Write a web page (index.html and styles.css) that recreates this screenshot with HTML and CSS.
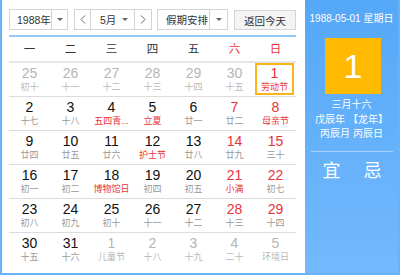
FILE: index.html
```html
<html>
<head>
<title>万年历</title>
<link rel="stylesheet" href="styles.css">
</head>
<body>
<div class="wnl">
	<div class="main">
		<div class="bar">
			<div class="sel year"><span class="txt">1988年</span><span class="drop"><i class="caret"></i></span></div>
			<div class="sel month">
				<span class="nav"><svg width="6" height="9" viewBox="0 0 6 9"><polyline points="5,0.5 1,4.5 5,8.5" fill="none" stroke="#666" stroke-width="1"/></svg></span>
				<span class="txt">5月</span><i class="caret"></i>
				<span class="nav next"><svg width="6" height="9" viewBox="0 0 6 9"><polyline points="1,0.5 5,4.5 1,8.5" fill="none" stroke="#666" stroke-width="1"/></svg></span>
			</div>
			<div class="sel hol"><span class="txt">假期安排</span><span class="drop"><i class="caret"></i></span></div>
			<button type="button" class="back">返回今天</button>
		</div>

		<div class="head">
			<span>一</span><span>二</span><span>三</span><span>四</span><span>五</span><span class="red">六</span><span class="red">日</span>
		</div>

		<div class="week">
			<div class="day other"><b>25</b><i>初十</i></div>
			<div class="day other"><b>26</b><i>十一</i></div>
			<div class="day other"><b>27</b><i>十二</i></div>
			<div class="day other"><b>28</b><i>十三</i></div>
			<div class="day other"><b>29</b><i>十四</i></div>
			<div class="day other"><b>30</b><i>十五</i></div>
			<div class="day wkd fest today"><b>1</b><i>劳动节</i></div>
		</div>
		<div class="week">
			<div class="day"><b>2</b><i>十七</i></div>
			<div class="day"><b>3</b><i>十八</i></div>
			<div class="day fest"><b>4</b><i title="五四青年节">五四青...</i></div>
			<div class="day fest"><b>5</b><i>立夏</i></div>
			<div class="day"><b>6</b><i>廿一</i></div>
			<div class="day wkd"><b>7</b><i>廿二</i></div>
			<div class="day wkd fest"><b>8</b><i>母亲节</i></div>
		</div>
		<div class="week">
			<div class="day"><b>9</b><i>廿四</i></div>
			<div class="day"><b>10</b><i>廿五</i></div>
			<div class="day"><b>11</b><i>廿六</i></div>
			<div class="day fest"><b>12</b><i>护士节</i></div>
			<div class="day"><b>13</b><i>廿八</i></div>
			<div class="day wkd"><b>14</b><i>廿九</i></div>
			<div class="day wkd"><b>15</b><i>三十</i></div>
		</div>
		<div class="week">
			<div class="day"><b>16</b><i>初一</i></div>
			<div class="day"><b>17</b><i>初二</i></div>
			<div class="day fest"><b>18</b><i>博物馆日</i></div>
			<div class="day"><b>19</b><i>初四</i></div>
			<div class="day"><b>20</b><i>初五</i></div>
			<div class="day wkd fest"><b>21</b><i>小满</i></div>
			<div class="day wkd"><b>22</b><i>初七</i></div>
		</div>
		<div class="week">
			<div class="day"><b>23</b><i>初八</i></div>
			<div class="day"><b>24</b><i>初九</i></div>
			<div class="day"><b>25</b><i>初十</i></div>
			<div class="day"><b>26</b><i>十一</i></div>
			<div class="day"><b>27</b><i>十二</i></div>
			<div class="day wkd"><b>28</b><i>十三</i></div>
			<div class="day wkd"><b>29</b><i>十四</i></div>
		</div>
		<div class="week last">
			<div class="day"><b>30</b><i>十五</i></div>
			<div class="day"><b>31</b><i>十六</i></div>
			<div class="day other"><b>1</b><i>儿童节</i></div>
			<div class="day other"><b>2</b><i>十八</i></div>
			<div class="day other"><b>3</b><i>十九</i></div>
			<div class="day other"><b>4</b><i>二十</i></div>
			<div class="day other"><b>5</b><i>环境日</i></div>
		</div>
	</div>

	<div class="side">
		<div class="date">1988-05-01 星期日</div>
		<div class="bigday">1</div>
		<div class="lunar">
			<p>三月十六</p>
			<p>戊辰年 【龙年】</p>
			<p>丙辰月 丙辰日</p>
		</div>
		<div class="yiji"><span>宜</span><span>忌</span></div>
	</div>
</div>
</body>
</html>
```

FILE: styles.css
```css
body {margin: 0; font-family: "Liberation Sans", "Noto Sans CJK SC", sans-serif;}

.wnl {
	display: flex;
	width: 400px;
	height: 275px;
	box-sizing: border-box;
	border: 2px solid #68b2fa;
	border-top-width: 0;
	background: #fff;
}

/* left part: toolbar + month grid */
.main {width: 303px; padding: 9px 9px 0 7px; box-sizing: border-box;}

.bar {display: flex; gap: 6px; height: 21px; padding-bottom: 5px; border-bottom: 2px solid #93c8f7;}

.sel {display: flex; align-items: center; height: 21px; box-sizing: border-box; border: 1px solid #d4d4d4; background: #fff; font-size: 10.5px; color: #333; white-space: nowrap;}
.sel .txt {flex: 1;}
.sel .drop {display: flex; align-items: center; justify-content: center; height: 100%; border-left: 1px solid #d4d4d4;}
.caret {display: block; width: 0; height: 0; border-left: 3px solid transparent; border-right: 3px solid transparent; border-top: 3px solid #666;}

.year {width: 59px;}
.year .txt {padding-left: 7px;}
.year .drop {width: 17px; flex: none;}

.month {width: 78px; margin-right: -1px;}
.month .nav {display: flex; align-items: center; justify-content: center; width: 15px; height: 100%; border-right: 1px solid #d4d4d4;}
.month .nav.next {border-right: 0; border-left: 1px solid #d4d4d4; width: 16px;}
.month .txt {padding-left: 9px;}
.month .caret {margin-right: 6px;}

.hol {width: 71px;}
.hol .txt {padding-left: 8px;}
.hol .drop {width: 17px; flex: none;}

.back {width: 62px; height: 20px; margin-top: 1px; padding: 0; border: 1px solid #d6d6d6; background: #f4f4f4; font-family: inherit; font-size: 10.5px; color: #333;}

.head {display: grid; grid-template-columns: repeat(7, 41px); height: 24px; line-height: 24px; border-bottom: 2px solid #e6e6e6; text-align: center; font-size: 11.5px; color: #333;}
.red {color: #e8333b;}

.week {display: grid; grid-template-columns: repeat(7, 41px); height: 34px; box-sizing: border-box; border-bottom: 1px solid #dcdcdc;}
.week.last {border-bottom: 0;}

.day {text-align: center; padding-top: 2px; box-sizing: border-box; overflow: hidden;}
.day b {display: block; font-weight: normal; font-size: 14px; line-height: 17px; color: #111;}
.day i {display: block; font-style: normal; font-size: 9px; line-height: 11px; color: #999; padding: 0 2px; white-space: nowrap;}
.day.wkd b {color: #e8333b;}
.day.fest i {color: #e8333b;}
.day.other b {color: #b5b5b5;}
.day.other i {color: #b9b9b9;}

/* selected day */
.day.today {width: 39px; height: 32px; border: 2px solid #fbb418; padding-top: 0;}

/* right part */
.side {width: 93px; background: linear-gradient(#55a8f8, #73b9fd); color: #fff; text-align: center; padding-top: 9px; box-sizing: border-box;}
.date {font-size: 10px; line-height: 20px;}
.bigday {width: 56px; height: 56px; margin: 9px 0 0 20px; background: #ffb900; font-size: 34px; line-height: 56px;}
.lunar {margin-top: 4px; font-size: 10px;}
.lunar p {margin: 0; line-height: 14.5px;}
.yiji {display: flex; justify-content: space-around; margin: 9px 5px 0 6px; border-top: 1px solid rgba(255,255,255,0.4); padding-top: 8px; font-size: 18px; line-height: 22px;}
```
